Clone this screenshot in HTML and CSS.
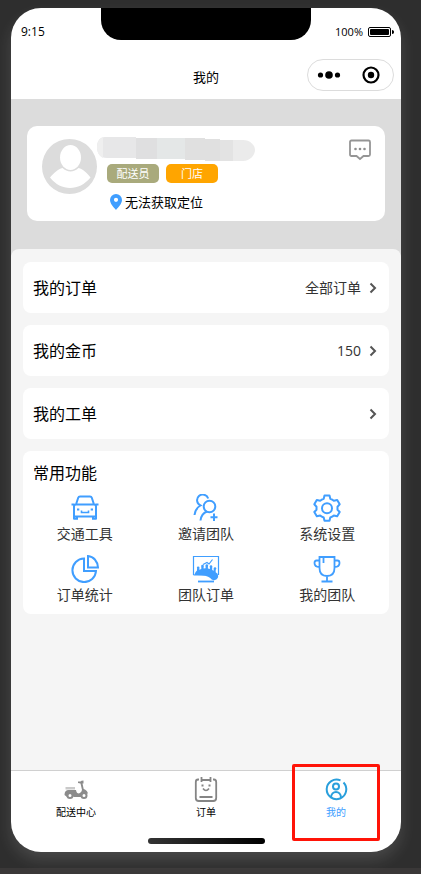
FILE: index.html
```html
<!DOCTYPE html>
<html lang="zh-CN">
<head>
<meta charset="utf-8">
<meta name="viewport" content="width=device-width, initial-scale=1">
<title>我的</title>
<link rel="stylesheet" href="styles.css">
</head>
<body>
<div class="phone">
  <header class="top">
    <div class="status">
      <span class="time">9:15</span>
      <span class="notch"></span>
      <span class="power">100%
        <svg width="26" height="10" viewBox="0 0 26 10"><rect x=".5" y=".5" width="22" height="9" rx="1.5" fill="#fff" stroke="#000"/><rect x="2" y="2" width="19" height="6" rx="1" /><path d="M24 3c1.500 0 2 1 2 2s-.5 2-2 2z"/></svg>
      </span>
    </div>
    <div class="nav">
      <h1>我的</h1>
      <div class="capsule">
        <button type="button" aria-label="更多"><svg width="24" height="18" viewBox="0 0 24 18"><circle cx="3.500" cy="9" r="2.600"/><circle cx="12" cy="9" r="3.800"/><circle cx="20.500" cy="9" r="2.600"/></svg></button>
        <button type="button" aria-label="关闭"><svg width="18" height="18" viewBox="0 0 18 18"><circle cx="9" cy="9" r="7.500" fill="none" stroke="#000" stroke-width="2.200"/><circle cx="9" cy="9" r="3.200"/></svg></button>
      </div>
    </div>
  </header>

  <section class="hero">
    <div class="profile">
      <svg class="avatar" viewBox="0 0 55 55"><circle cx="27.500" cy="27.500" r="27.500" fill="#dcdcdc"/><ellipse cx="28.500" cy="18.500" rx="10.500" ry="12.500" fill="#fff"/><path d="M8 38.500C12 34 16 30 20.500 29c4.500 4.500 11.500 4.500 16 0C41 30 45 34 48.500 38.500 37 52.500 19 52.500 8 38.500z" fill="#fff"/></svg>
      <div class="info">
        <svg class="masked" viewBox="0 0 158 25"><path d="M8 0H39V21H10C3 21 0 16 0 10S3 0 8 0z" fill="#e7e7e8"/><path d="M6 0C2 2 0 5 0 10s2 9 6 11z" fill="#efefef"/><path d="M39 1H60V22H39z" fill="#dfdfe0"/><path d="M60 1H88V22H60z" fill="#e4e7e7"/><path d="M88 1H108V2H123V24H108V23H88z" fill="#e0e0e0"/><path d="M123 3h13v21h-13z" fill="#e3e3e3"/><path d="M136 3h10c7 0 12 5 12 10s-5 11-12 11h-10z" fill="#ebebeb"/></svg>
        <div class="tags"><span class="tag courier">配送员</span><span class="tag store">门店</span></div>
        <div class="place"><svg width="12" height="16" viewBox="0 0 12 16"><path fill="#409eff" fill-rule="evenodd" d="M6 0a6 6 0 0 0-6 6c0 3.500 3.500 7 6 10 2.500-3 6-6.500 6-10a6 6 0 0 0-6-6zm0 3.700a2.100 2.100 0 1 1 0 4.200 2.100 2.100 0 0 1 0-4.200z"/></svg>无法获取定位</div>
      </div>
      <button type="button" class="message" aria-label="消息"><svg width="22" height="22" viewBox="0 0 22 22"><path d="M2.500 1.500h17q1.500 0 1.500 1.500v12.500q0 1.500-1.500 1.500h-5L11 20 7.500 17h-5Q1 17 1 15.500V3q0-1.500 1.500-1.500z" fill="none" stroke="#959595" stroke-width="1.800"/><g fill="#8d8d8d"><circle cx="6.500" cy="10" r="1.300"/><circle cx="11" cy="10" r="1.300"/><circle cx="15.500" cy="10" r="1.300"/></g></svg></button>
    </div>
  </section>

  <main class="panel">
    <a class="row" href="#orders"><span>我的订单</span><span class="value">全部订单</span><svg class="arrow" viewBox="0 0 8 12"><path d="M1.500 1.500 6 6l-4.500 4.500"/></svg></a>
    <a class="row" href="#coins"><span>我的金币</span><span class="value">150</span><svg class="arrow" viewBox="0 0 8 12"><path d="M1.500 1.500 6 6l-4.500 4.500"/></svg></a>
    <a class="row" href="#tickets"><span>我的工单</span><span class="value"></span><svg class="arrow" viewBox="0 0 8 12"><path d="M1.500 1.500 6 6l-4.500 4.500"/></svg></a>

    <section class="tools">
      <h2>常用功能</h2>
      <div class="grid">
        <a href="#vehicle"><svg viewBox="0 0 28 28"><path d="M5 10.500 7.200 3.800q.4-1.300 1.800-1.300h10q1.400 0 1.800 1.300l2.200 6.700M.5 10.500h3M24.500 10.500h3M3 25.500V12.500q0-2 2-2h18q2 0 2 2v13M3 22.500h22M3 24.800h3v-2M25 24.800h-3v-2" stroke-width="2"/><path d="M10.500 16.500v2h7v-2" stroke-width="1.600"/><path d="M6 14.500h2.300v2H6zM19.700 14.500H22v2h-2.300z" fill="#409eff" stroke="none"/></svg>交通工具</a>
        <a href="#invite"><svg viewBox="0 0 28 28"><circle cx="17.500" cy="12.500" r="5.800"/><path d="M16.200 4.500a5.700 5.700 0 1 0-7.700 7C5 13.500 3 16.500 2.500 21M8.500 26.500c.5-4.500 2.500-7.500 6.500-9M22 19.500v7.500M18.500 23.300h7"/></svg>邀请团队</a>
        <a href="#settings"><svg viewBox="0 0 28 28"><path d="M11.500 1.500h5l.8 3.300q2 .7 3.500 1.900L24.200 6l2.500 4.300-2.200 2.400v3l2.200 2.300-2.500 4.300-3.400-.7q-1.500 1.100-3.500 1.900l-.8 3.200h-5l-.8-3.200q-2-.8-3.500-1.900l-3.400.7L1.300 18l2.200-2.300v-3l-2.200-2.400L3.800 6l3.400.7q1.500-1.200 3.500-1.900z" stroke-linejoin="round"/><circle cx="14" cy="14.200" r="5"/></svg>系统设置</a>
        <a href="#stats"><svg viewBox="0 0 28 28"><path d="M13 3.500A11.800 11.800 0 1 0 25 16H13z"/><path d="M17 1v11.500h10C26.500 6 22.500 1.500 17 1z"/></svg>订单统计</a>
        <a href="#teamorders"><svg viewBox="0 0 28 28"><path d="M1.500 20V1.500h25V20M1.500 20h16" stroke-width="1.200"/><path d="M6 26.500h16" stroke-width="1.800"/><path d="m11 9.500 4-2 2 1.500 3.500-4.500" stroke-width="1.200"/><path d="M2.500 19.500q1-3 2.500-4v-2.200h2.300v1.500l2-.8v-2.500h2.300v2l2-.2V11h2.300v2.500l2 .5v-2h2.300v3l1.500.8v-2h2v3.500q2.500 1 2.500 3.700a4.300 4.300 0 0 1-8 2q-4-3.500-15.700-3z" fill="#409eff" stroke="none"/><g fill="#409eff" stroke="none"><circle cx="6.200" cy="12.700" r="1.300"/><circle cx="10.500" cy="11" r="1.300"/><circle cx="14.800" cy="10.500" r="1.300"/><circle cx="19" cy="11.500" r="1.300"/><circle cx="23" cy="13.500" r="1.300"/></g></svg>团队订单</a>
        <a href="#team"><svg viewBox="0 0 28 28"><path d="M6.500 2h15v11q0 8-7.500 8t-7.500-8zM6.500 5.500h-3Q1.500 5.500 1.500 8q0 4 5 4M21.500 5.500h3q2 0 2 2.500 0 4-5 4M14 21v5M8.500 26.500h11M10.500 3v5" stroke-width="1.800"/></svg>我的团队</a>
      </div>
    </section>
  </main>

  <nav class="tabs">
    <a href="#center"><svg viewBox="0 0 26 26"><g fill="#8b8b8b"><path d="M2.500 10h9.500v2.500H2.500z" fill="#c9c9c9"/><path d="M1.500 18q0-4.500 3.500-5h8q.5 3.500 3 3.500 2.500-.5 3-3.500L17.500 6.500l-2.500-.5V4.500h2.500q.5-1 3-1v3h-1l1.200 5.500q3.500 1 4.300 4.500l-4 .5-2 3h-8q-4-3-7 0z"/></g><g fill="#fff" stroke="#8b8b8b" stroke-width="2"><circle cx="7" cy="18.500" r="2.500"/><circle cx="21" cy="18.500" r="2.500"/></g></svg>配送中心</a>
    <a href="#order"><svg viewBox="0 0 26 26"><g fill="none" stroke="#858585" stroke-width="1.800"><path d="M6 2.500H5Q2.800 2.500 2.800 5v16q0 3 3 3h14.400q3 0 3-3V5q0-2.500-2.200-2.500h-1M8.500 0v5M17.500 0v5M8.500 3h9M6.500 20h13"/><path d="M10 11.500q3 4 6 0" stroke-width="1.600"/></g><path fill="#858585" d="M8.500 7.500h2v2h-2zM15.500 7.500h2v2h-2z"/></svg>订单</a>
    <a class="active" href="#me" aria-current="page"><svg viewBox="0 0 26 26"><g fill="none" stroke="#299fdc" stroke-width="2"><path d="M20.500 5.500A9.800 9.800 0 1 1 17.500 3.400"/><circle cx="13" cy="9.500" r="3"/><path d="M8 21c0-8 10-8 10 0"/></g></svg>我的<span class="marker"></span></a>
  </nav>
  <div class="home"></div>
</div>
</body>
</html>
```
FILE: styles.css
```css
* { box-sizing: border-box; }
body {
  margin: 0;
  min-height: 100vh;
  padding: 8px 20px 22px 11px;
  display: flex;
  background: linear-gradient(to top, #3a3838 6px, #2e2e2e 6px);
  font-family: "Open Sans", "Noto Sans CJK SC", sans-serif;
  font-weight: 400;
  color: #000;
}
h1, h2 { margin: 0; font-weight: inherit; }
a { color: inherit; text-decoration: none; }
button { border: 0; padding: 0; background: none; display: flex; }
svg { display: block; flex: none; }

.phone {
  flex: 1;
  min-width: 0;
  display: flex;
  flex-direction: column;
  background: #fff;
  border-radius: 30px;
  overflow: hidden;
  box-shadow: 0 8px 16px rgba(255, 255, 255, .13);
}

.status {
  display: grid;
  grid-template-columns: 1fr 210px 1fr;
  height: 48px;
  font-size: 12px;
  line-height: 48px;
}
.time { padding-left: 10px; }
.notch { height: 32px; background: #000; border-radius: 0 0 20px 20px; }
.power {
  display: flex;
  align-items: center;
  justify-content: flex-end;
  gap: 5px;
  padding-right: 7px;
  font-size: 11px;
}
.nav {
  display: grid;
  grid-template-columns: 1fr auto 1fr;
  align-items: start;
  height: 43px;
  padding: 3px 7px 0;
}
.nav h1 { grid-column: 2; font-size: 13px; line-height: 36px; }
.capsule {
  justify-self: end;
  display: flex;
  align-items: center;
  justify-content: space-between;
  width: 87px;
  height: 32px;
  padding: 0 13px 0 9px;
  border: 1px solid #dcdcdc;
  border-radius: 16px;
}

.hero { padding: 27px 16px 28px; background: #dcdcdc; }
.profile {
  display: flex;
  align-items: flex-start;
  height: 95px;
  padding: 11px 14px 0 15px;
  background: #fff;
  border-radius: 10px;
}
.avatar { width: 55px; height: 55px; margin-top: 2px; }
.info { flex: 1; }
.masked { width: 158px; height: 25px; }
.tags { display: flex; gap: 7px; margin: 2px 0 0 10px; }
.tag {
  width: 52px;
  border-radius: 5px;
  font-size: 11px;
  line-height: 19px;
  text-align: center;
  color: #fff;
}
.courier { background: #a9aa7c; }
.store { background: #ffa500; }
.place {
  display: flex;
  align-items: center;
  gap: 3px;
  margin: 9px 0 0 13px;
  font-size: 13px;
  line-height: 20px;
}
.message { margin-top: 2px; }

.panel {
  flex: 1;
  display: flex;
  flex-direction: column;
  gap: 12px;
  padding: 13px 12px;
  background: #f5f5f5;
  box-shadow: 0 -10px 0 #dcdcdc;
  border-radius: 8px 8px 0 0;
}
.row {
  display: flex;
  align-items: center;
  height: 51px;
  padding: 0 12px 0 10px;
  background: #fff;
  border-radius: 8px;
  font-size: 16px;
  line-height: 24px;
}
.value { margin-left: auto; font-size: 14px; color: #333; }
.arrow { width: 8px; height: 12px; margin-left: 8px; fill: none; stroke: #555; stroke-width: 2; }
.tools { padding: 10px 1px 9px; background: #fff; border-radius: 8px; }
.tools h2 { padding-left: 9px; font-size: 16px; line-height: 24px; }
.grid {
  display: grid;
  grid-template-columns: repeat(3, 1fr);
  row-gap: 11px;
  margin-top: 9px;
}
.grid a {
  display: flex;
  flex-direction: column;
  align-items: center;
  gap: 2px;
  font-size: 14px;
  line-height: 20px;
  color: #333;
}
.grid svg { width: 28px; height: 28px; fill: none; stroke: #409eff; stroke-width: 2; }

.tabs {
  display: grid;
  grid-template-columns: repeat(3, 1fr);
  height: 68px;
  padding-top: 6px;
  border-top: 1px solid #d0d0d0;
}
.tabs a {
  position: relative;
  display: flex;
  flex-direction: column;
  align-items: center;
  gap: 1px;
  font-size: 10px;
  line-height: 16px;
}
.tabs svg { width: 26px; height: 26px; }
.tabs .active { color: #409eff; }
.marker {
  position: absolute;
  top: -13px;
  left: 21px;
  width: 88px;
  height: 77px;
  border: 3px solid #ff1408;
  border-radius: 2px;
}
.home {
  width: 117px;
  height: 6px;
  margin: 0 auto 8px;
  border-radius: 3px;
  background: linear-gradient(90deg, #333, #000);
}
```
